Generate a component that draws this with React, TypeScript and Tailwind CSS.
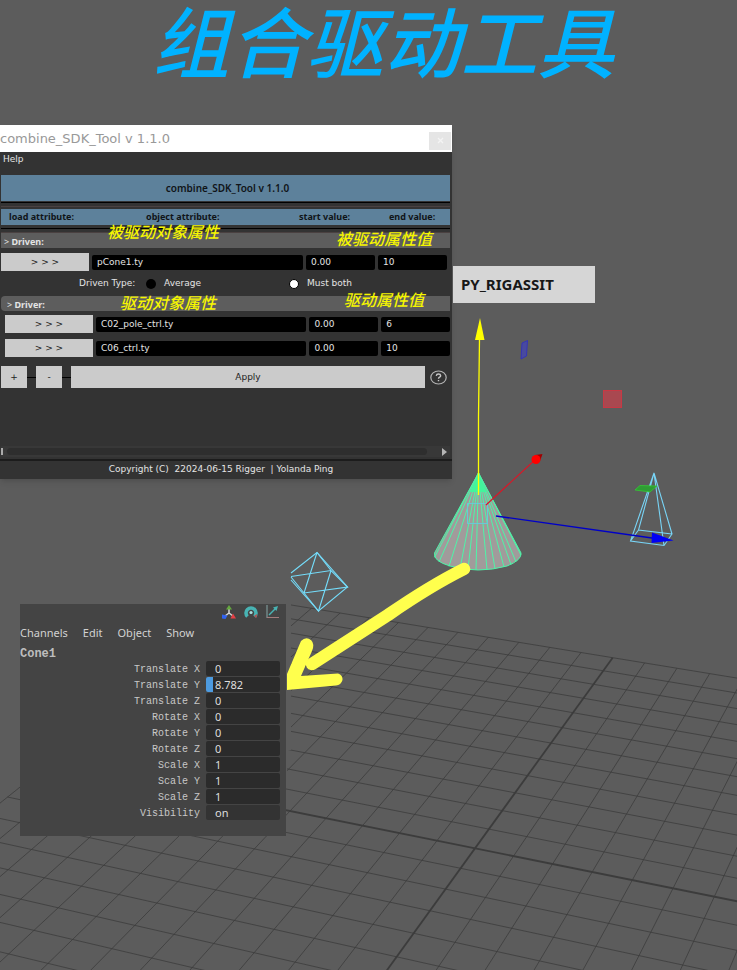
import React from "react";

// Perspective projection of the ground plane: (u, v) grid units to viewport pixels.
function project(u: number, v: number): [number, number] {
  const w = 1 - 0.0068 * u + 0.01942 * v;
  const x = (585 + 110.8 * u + 53.8 * v) / w;
  const y = (745 + 18.1 * u - 44.3 * v) / w;
  return [280 + x / 3, 600 + y / 3];
}

const gridSteps = Array.from({ length: 25 }, (_, i) => i - 12);

function GridLine({ from, to, heavy }: { from: [number, number]; to: [number, number]; heavy: boolean }) {
  return (
    <line
      x1={from[0]}
      y1={from[1]}
      x2={to[0]}
      y2={to[1]}
      stroke="#3c3c3c"
      strokeWidth={heavy ? 1.8 : 0.8}
    />
  );
}

const coneBase = [434.5, 439, 449, 460, 468, 476, 487, 495, 504, 511, 516, 521];

function coneEdgeY(x: number) {
  const t = (x - 477.5) / 43.5;
  return 555 + 15 * Math.sqrt(Math.max(0, 1 - t * t));
}

function Viewport() {
  return (
    <svg className="pointer-events-none absolute left-0 top-0" width="737" height="970" viewBox="0 0 737 970" fill="none" aria-hidden="true">
      <defs>
        <clipPath id="ground">
          <path d="M291 590H737V970H0V780H287V750H291Z" />
        </clipPath>
      </defs>
      <g clipPath="url(#ground)">
        {gridSteps.map((s) => (
          <React.Fragment key={s}>
            <GridLine from={project(s, -12)} to={project(s, 12)} heavy={s === 0} />
            <GridLine from={project(-12, s)} to={project(12, s)} heavy={s === 0} />
          </React.Fragment>
        ))}
      </g>

      {/* octahedron */}
      <g stroke="#74dcfa" strokeWidth="1.1">
        <path d="M291 573L317 552.5L347.500 587L318.500 611L291 580" />
        <path d="M291 576.500L331 570.500L347.500 587L304 593L291 577M317 552.500L304 593L318.500 611L331 570.500L317 552.500" />
      </g>

      {/* cone */}
      <path d="M478.500 473L434.500 553Q433 561 450 566Q478 574 507 566Q522 560 521 553Z" fill="#a19b9b" />
      <g stroke="#4df5a8" strokeWidth="1">
        <path d="M478.500 473L434.500 553Q433 561 450 566Q478 574 507 566Q522 560 521 553Z" />
        {coneBase.map((x) => (
          <line key={x} x1="478.5" y1="473" x2={x} y2={coneEdgeY(x)} />
        ))}
      </g>
      <path d="M478.500 474L470 492H487Z" fill="#42f59c" />
      <rect x="467.500" y="503.500" width="20" height="20" stroke="#69c8d8" />

      {/* manipulator axes */}
      <path d="M478.500 495V417L479.500 338" stroke="#ffff00" strokeWidth="1.3" />
      <path d="M480 318L484.500 340H475Z" fill="#ffff00" />
      <path d="M486 505L537 458" stroke="#d81828" strokeWidth="1.2" />
      <path d="M535 455L542.500 454L540 461Z" fill="#a00000" />
      <circle cx="536" cy="459.500" r="4.500" fill="#ff0000" />

      {/* pyramid */}
      <g stroke="#78d4f6" strokeWidth="1.1">
        <path d="M654 473L630.500 541L664 545.500L672 534L654 473L664 545.500M654 473L638.500 530L672 534M638.500 530L630.500 541" />
      </g>
      <path d="M640 485.500L657 486L650 492L635 490Z" fill="#2f9c34" stroke="#30d530" strokeWidth="0.7" />
      <path d="M496 516L652 538" stroke="#0000c8" strokeWidth="1.3" />
      <path d="M652 532.500L673.500 540.500L651.500 543Z" fill="#0000f5" />

      {/* plane handles */}
      <path d="M522 343L527.500 340.500L526.500 356L521 359Z" fill="#494a9e" stroke="#2d2dc4" strokeWidth="0.8" />
      <rect x="603.500" y="390.500" width="18" height="17" fill="#a94850" stroke="#c93844" strokeWidth="1" />

      {/* hand-drawn arrow */}
      <path d="M464 569Q430 586 388 615L312 664" stroke="#ffff4d" strokeWidth="12.500" strokeLinecap="round" strokeLinejoin="round" />
      <path d="M301 641Q306 636 311 640Q315 644 312 651L301 676L338 673.500Q343 675 342.500 680Q341 685 336 685.500L287 690V674Z" fill="#ffff4d" />
    </svg>
  );
}

const fieldClass =
  "h-[15px] min-w-0 rounded-xs border-0 bg-black px-[5px] font-['DejaVu_Sans',sans-serif] text-[9px] leading-[15px] text-[#e4e4e4] outline-none";
const grayButton = "border-0 bg-[#cbcbcb] text-[9px] leading-[14px] text-[#222]";

function AttributeRow({ name, start, end, label }: { name: string; start: string; end: string; label: string }) {
  return (
    <div className="flex h-[18px] items-center gap-[3px]">
      <button type="button" className={`${grayButton} h-[18px] w-[88px] shrink-0`}>
        &gt; &gt; &gt;
      </button>
      <input aria-label={`${label} object attribute`} defaultValue={name} className={`${fieldClass} w-[211px]`} />
      <input aria-label={`${label} start value`} defaultValue={start} className={`${fieldClass} w-[69px]`} />
      <input aria-label={`${label} end value`} defaultValue={end} className={`${fieldClass} w-[69px]`} />
    </div>
  );
}

function Note({ className, children }: { className: string; children: React.ReactNode }) {
  return (
    <span
      className={`absolute whitespace-nowrap font-['Noto_Sans_CJK_SC',sans-serif] text-[16px] italic font-medium leading-5 text-[#f6f600] ${className}`}
    >
      {children}
    </span>
  );
}

function ToolWindow() {
  return (
    <section className="absolute left-0 top-[125px] w-[452px] bg-[#333] font-['DejaVu_Sans',sans-serif] text-[9px] text-[#e4e4e4] shadow-md">
      <header className="flex h-[27px] items-center justify-between bg-white">
        <h2 className="whitespace-nowrap text-[13px] leading-5 text-[#999]">combine_SDK_Tool v 1.1.0</h2>
        <button type="button" aria-label="Close" className="mt-1 mr-px flex h-[18px] w-[22px] items-center justify-center bg-[#e5e5e5]">
          <svg width="7" height="7" viewBox="0 0 7 7" stroke="#f4f4f4" strokeWidth="1.3" aria-hidden="true">
            <path d="M1 1L6 6M6 1L1 6" />
          </svg>
        </button>
      </header>
      <nav className="flex h-[23px] items-start px-[3px]">
        <button type="button" className="leading-[15px]">Help</button>
      </nav>
      <div className="mx-px mr-[2px]">
        <div className="flex h-[26px] items-center justify-center bg-[#5d819b] pl-1 font-['Noto_Sans',sans-serif] text-[10px] font-semibold text-[#101418]">
          combine_SDK_Tool v 1.1.0
        </div>
        <div className="h-2 pt-px">
          <div className="h-px bg-black" />
          <div className="mt-[3px] h-px bg-[#4a4141]" />
        </div>
        <div className="flex h-4 items-center bg-[#5d819b] pl-2 font-['Noto_Sans',sans-serif] font-bold whitespace-nowrap text-[#101418]">
          <span className="w-[137px]">load attribute:</span>
          <span className="w-[153px]">object attribute:</span>
          <span className="w-[90px]">start value:</span>
          <span>end value:</span>
        </div>
        <div className="h-2 pt-[3px]">
          <div className="h-px bg-black" />
          <div className="mt-[3px] h-px bg-[#4a4141]" />
        </div>
        <h3 className="h-[15px] bg-[#5d5d5d] pl-[3px] font-['Noto_Sans',sans-serif] leading-[17px]">
          &gt; <b>Driven:</b>
        </h3>
        <div className="pt-[5px]">
          <AttributeRow label="Driven" name="pCone1.ty" start="0.00" end="10" />
        </div>
        <fieldset className="flex h-[25px] items-center">
          <span className="w-[145px] pl-[78px] whitespace-nowrap">Driven Type:</span>
          <label className="flex w-[143px] items-center gap-2">
            <input type="radio" name="drivenType" className="size-[10px] appearance-none rounded-full bg-black" />
            Average
          </label>
          <label className="flex items-center gap-2">
            <input type="radio" name="drivenType" defaultChecked className="size-[10px] appearance-none rounded-full border border-black bg-white" />
            Must both
          </label>
        </fieldset>
        <h3 className="h-[15px] rounded-l bg-[#5d5d5d] pl-[6px] font-['Noto_Sans',sans-serif] leading-[17px]">
          &gt; <b>Driver:</b>
        </h3>
        <div className="flex flex-col gap-[6px] pt-1 pl-1">
          <AttributeRow label="Driver 1" name="C02_pole_ctrl.ty" start="0.00" end="6" />
          <AttributeRow label="Driver 2" name="C06_ctrl.ty" start="0.00" end="10" />
        </div>
        <div className="mt-[9px] flex h-[22px] items-center">
          <button type="button" className={`${grayButton} h-[22px] w-[26px]`}>+</button>
          <span className="h-px w-[9px] bg-black" />
          <button type="button" className={`${grayButton} h-[22px] w-[26px]`}>-</button>
          <span className="h-px w-[9px] bg-black" />
          <button type="button" className={`${grayButton} h-[22px] flex-1`}>Apply</button>
          <button type="button" aria-label="Help" className="ml-[5px] mr-[3px]">
            <svg width="17" height="15" viewBox="0 0 17 15" fill="none" aria-hidden="true">
              <ellipse cx="8.500" cy="7.500" rx="7.700" ry="6.500" stroke="#b4b4b4" strokeWidth="1.200" />
              <path d="M6.300 5.800Q6.500 4 8.500 4T10.700 5.800Q10.700 6.700 9.500 7.200Q8.500 7.700 8.500 8.800M8.500 10V11.300" stroke="#c8c8c8" strokeWidth="1.400" />
            </svg>
          </button>
        </div>
        <div className="mt-[58px] flex h-[11px] items-center bg-[#383838]">
          <span className="h-[7px] w-[2px] bg-[#aaa]" />
          <span className="ml-1 h-[7px] w-[420px] rounded-full bg-[#2e2e2e]" />
          <svg className="ml-auto mr-[3px]" width="5" height="8" viewBox="0 0 5 8" aria-hidden="true">
            <path d="M0 0L5 4L0 8Z" fill="#b5b5b5" />
          </svg>
        </div>
      </div>
      <footer className="mt-[2px] flex h-5 items-center justify-center border-t-2 border-[#1c1c1c] pr-[10px] whitespace-pre">
        {"Copyright (C)  22024-06-15 Rigger  | Yolanda Ping"}
      </footer>
      <Note className="left-[107px] top-[96px]">被驱动对象属性</Note>
      <Note className="left-[336px] top-[103px]">被驱动属性值</Note>
      <Note className="left-[120px] top-[167px]">驱动对象属性</Note>
      <Note className="left-[344px] top-[164px]">驱动属性值</Note>
    </section>
  );
}

const channels: [string, string][] = [
  ["Translate X", "0"],
  ["Translate Y", "8.782"],
  ["Translate Z", "0"],
  ["Rotate X", "0"],
  ["Rotate Y", "0"],
  ["Rotate Z", "0"],
  ["Scale X", "1"],
  ["Scale Y", "1"],
  ["Scale Z", "1"],
  ["Visibility", "on"],
];

function ChannelBox() {
  return (
    <section className="absolute left-5 top-[604px] h-[232px] w-[266px] bg-[#444] font-['Noto_Sans',sans-serif] text-[11px] text-[#d2d2d2]">
      <div className="flex h-[16px] items-center justify-end gap-2 pr-[7px]">
        <svg width="14" height="14" viewBox="0 0 14 14" fill="none" aria-hidden="true">
          <path d="M7 3V8M7 8L3 11M7 8L11 11" stroke="#d5d5d5" strokeWidth="1.500" />
          <path d="M7 0L10 4.500H4Z" fill="#65a83f" />
          <path d="M0 9.500L5.500 10.500L3.500 14L0 13.500Z" fill="#3162ef" />
          <path d="M11 8.500L14 13.500L8.500 13.500Z" fill="#e63f45" />
        </svg>
        <svg width="14" height="14" viewBox="0 0 14 14" fill="none" aria-hidden="true">
          <path d="M3.500 11.500A5 5 0 1 1 10.500 11.500" stroke="#48b4b4" strokeWidth="3.600" />
          <circle cx="7" cy="7.500" r="1.600" fill="#a9dede" />
          <path d="M10 11L13 9L12.500 13Z" fill="#b84b4b" />
        </svg>
        <svg width="13" height="14" viewBox="0 0 13 14" fill="none" aria-hidden="true">
          <path d="M1 0V13" stroke="#86a6a6" />
          <path d="M1 12.500H13" stroke="#a47c7c" />
          <path d="M3 10L9 4" stroke="#48b4b4" strokeWidth="1.500" />
          <path d="M12 1L7 2.500L10.500 6Z" fill="#48b4b4" />
        </svg>
      </div>
      <nav className="flex h-[26px] items-center gap-[15px] leading-[18px]">
        <button type="button">Channels</button>
        <button type="button">Edit</button>
        <button type="button">Object</button>
        <button type="button">Show</button>
      </nav>
      <h3 className="h-[14px] font-['Liberation_Mono',monospace] text-[12px] font-bold leading-[16px] text-[#bdbdbd]">Cone1</h3>
      <div>
        {channels.map(([name, value]) => (
          <label key={name} className="flex h-4 items-center justify-end gap-[6px] pr-[6px]">
            <span className="pt-[4px] font-['Liberation_Mono',monospace] text-[10px] leading-[12px] text-[#c8c8c8]">{name}</span>
            <input
              defaultValue={value}
              className={`h-[15px] w-[74px] rounded-xs border-0 pl-[9px] text-[11px] leading-[15px] text-[#dedede] outline-none ${
                name === "Translate Y"
                  ? "bg-linear-to-r from-[#4d9be0] from-[7px] to-[#2b2b2b] to-[7px]"
                  : name === "Visibility"
                    ? "bg-[#333]"
                    : "bg-[#2b2b2b]"
              }`}
            />
          </label>
        ))}
      </div>
    </section>
  );
}

export default function App() {
  return (
    <main className="relative min-h-[970px] w-full overflow-hidden bg-[#5c5c5c]">
      <Viewport />
      <h1 className="relative pl-[30px] text-center font-['Noto_Sans_CJK_SC',sans-serif] text-[77px] font-medium italic leading-[78px] whitespace-nowrap text-[#00b2ff]">
        组合驱动工具
      </h1>
      <ToolWindow />
      <div className="absolute left-[453px] top-[266px] flex h-[37px] w-[142px] items-center bg-[#d6d6d6] pl-2 font-['Noto_Sans',sans-serif] text-[15px] font-bold text-[#181818]">
        PY_RIGASSIT
      </div>
      <ChannelBox />
    </main>
  );
}
